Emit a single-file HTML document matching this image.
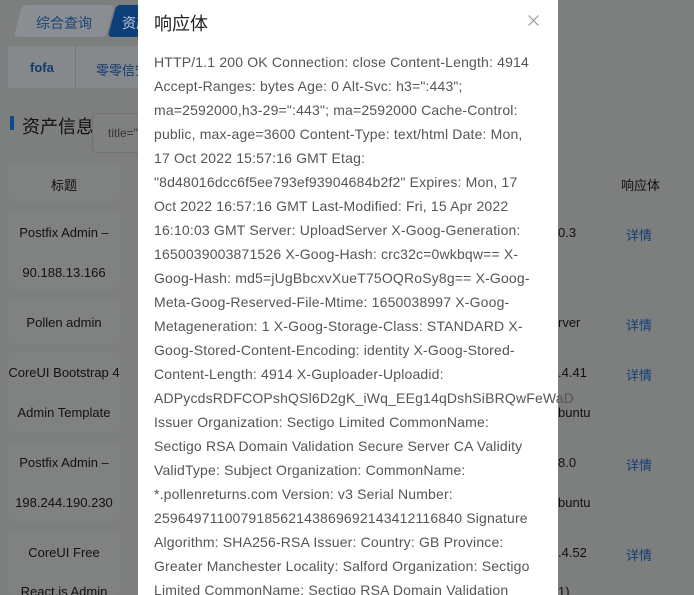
<!DOCTYPE html>
<html><head><meta charset="utf-8"><style>
*{margin:0;padding:0;box-sizing:border-box}
html,body{width:694px;height:595px;overflow:hidden}
body{background:#7d7e7e;font-family:"Liberation Sans","Noto Sans CJK SC",sans-serif;position:relative}
.a{position:absolute}
.tab1{left:18px;top:5px;width:92px;height:32px;background:#8a8e92;transform:skewX(-15deg);border-radius:4px}
.tab2{left:112px;top:5px;width:40px;height:32px;background:#0d3f78;transform:skewX(-15deg);border-radius:4px}
.t{color:#123c6e;font-size:14px}
.sub{left:8px;top:46px;width:140px;height:42px;background:#85898c}
.row{background:#808181;border-radius:6px}
.c{font-size:13px;color:#111;text-align:center;width:128px;left:0}
.r{font-size:13px;color:#111}
.l{font-size:13px;color:#133f78;left:626px}
.modal{left:138px;top:0;width:420px;height:595px;background:#fff;overflow:visible}
.ttl{left:16px;top:10px;font-size:18px;color:#222}
.body{left:16px;top:50px;font-size:14px;letter-spacing:0.17px;line-height:24px;color:#555;white-space:nowrap}
</style></head><body>
<div class="a tab1"></div><div class="a t" style="left:36px;top:13px;color:#1a4474">综合查询</div>
<div class="a tab2"></div><div class="a" style="left:122px;top:13px;color:#bcc8d8;font-size:14px">资产</div>
<div class="a sub"></div>
<div class="a t" style="left:30px;top:60px;font-weight:bold;font-size:13px">fofa</div>
<div class="a" style="left:75px;top:46px;width:1px;height:42px;background:#777"></div>
<div class="a t" style="left:96px;top:60px;font-size:13px">零零信安</div>
<div class="a" style="left:10px;top:116px;width:4px;height:14px;background:#0d4a8a"></div>
<div class="a" style="left:22px;top:113px;font-size:18px;color:#111">资产信息</div>
<div class="a" style="left:92px;top:113px;width:60px;height:40px;border:1px solid #707070;border-radius:5px;background:#7f8080"></div>
<div class="a" style="left:108px;top:126px;font-size:12px;color:#333">title="</div>
<div class="a row" style="left:8px;top:162px;width:112px;height:40px"></div>
<div class="a c" style="top:175px">标题</div>
<div class="a r" style="left:621px;top:175px">响应体</div>
<div class="a row" style="left:8px;top:210px;width:112px;height:80px"></div>
<div class="a c" style="top:225px">Postfix Admin –</div>
<div class="a c" style="top:265px">90.188.13.166</div>
<div class="a row" style="left:8px;top:300px;width:112px;height:45px"></div>
<div class="a c" style="top:315px">Pollen admin</div>
<div class="a row" style="left:8px;top:352px;width:112px;height:80px"></div>
<div class="a c" style="top:365px">CoreUI Bootstrap 4</div>
<div class="a c" style="top:405px">Admin Template</div>
<div class="a row" style="left:8px;top:442px;width:112px;height:80px"></div>
<div class="a c" style="top:455px">Postfix Admin –</div>
<div class="a c" style="top:495px">198.244.190.230</div>
<div class="a row" style="left:8px;top:532px;width:112px;height:63px"></div>
<div class="a c" style="top:545px">CoreUI Free</div>
<div class="a c" style="top:584px">React.js Admin</div>
<div class="a r" style="left:558px;top:225px">0.3</div>
<div class="a r" style="left:558px;top:315px">rver</div>
<div class="a r" style="left:558px;top:365px">.4.41</div>
<div class="a r" style="left:558px;top:405px">buntu</div>
<div class="a r" style="left:558px;top:455px">8.0</div>
<div class="a r" style="left:558px;top:495px">buntu</div>
<div class="a r" style="left:558px;top:545px">.4.52</div>
<div class="a r" style="left:558px;top:584px">1)</div>
<div class="a l" style="top:225px">详情</div>
<div class="a l" style="top:315px">详情</div>
<div class="a l" style="top:365px">详情</div>
<div class="a l" style="top:455px">详情</div>
<div class="a l" style="top:545px">详情</div>
<div class="a modal">
<div class="a ttl">响应体</div>
<svg class="a" style="left:390px;top:15px" width="11" height="11" viewBox="0 0 11 11"><path d="M0.5 0.5L10.5 10.5M10.5 0.5L0.5 10.5" stroke="#999" stroke-width="1.2" fill="none"/></svg>
<div class="a body">HTTP/1.1 200 OK Connection: close Content-Length: 4914<br>Accept-Ranges: bytes Age: 0 Alt-Svc: h3=":443";<br>ma=2592000,h3-29=":443"; ma=2592000 Cache-Control:<br>public, max-age=3600 Content-Type: text/html Date: Mon,<br>17 Oct 2022 15:57:16 GMT Etag:<br>"8d48016dcc6f5ee793ef93904684b2f2" Expires: Mon, 17<br>Oct 2022 16:57:16 GMT Last-Modified: Fri, 15 Apr 2022<br>16:10:03 GMT Server: UploadServer X-Goog-Generation:<br>1650039003871526 X-Goog-Hash: crc32c=0wkbqw== X-<br>Goog-Hash: md5=jUgBbcxvXueT75OQRoSy8g== X-Goog-<br>Meta-Goog-Reserved-File-Mtime: 1650038997 X-Goog-<br>Metageneration: 1 X-Goog-Storage-Class: STANDARD X-<br>Goog-Stored-Content-Encoding: identity X-Goog-Stored-<br>Content-Length: 4914 X-Guploader-Uploadid:<br>ADPycdsRDFCOPshQSl6D2gK_iWq_EEg14qDshSiBRQwFeWaD<br>Issuer Organization: Sectigo Limited CommonName:<br>Sectigo RSA Domain Validation Secure Server CA Validity<br>ValidType: Subject Organization: CommonName:<br>*.pollenreturns.com Version: v3 Serial Number:<br>259649711007918562143869692143412116840 Signature<br>Algorithm: SHA256-RSA Issuer: Country: GB Province:<br>Greater Manchester Locality: Salford Organization: Sectigo<br>Limited CommonName: Sectigo RSA Domain Validation</div>
</div>
</body></html>
